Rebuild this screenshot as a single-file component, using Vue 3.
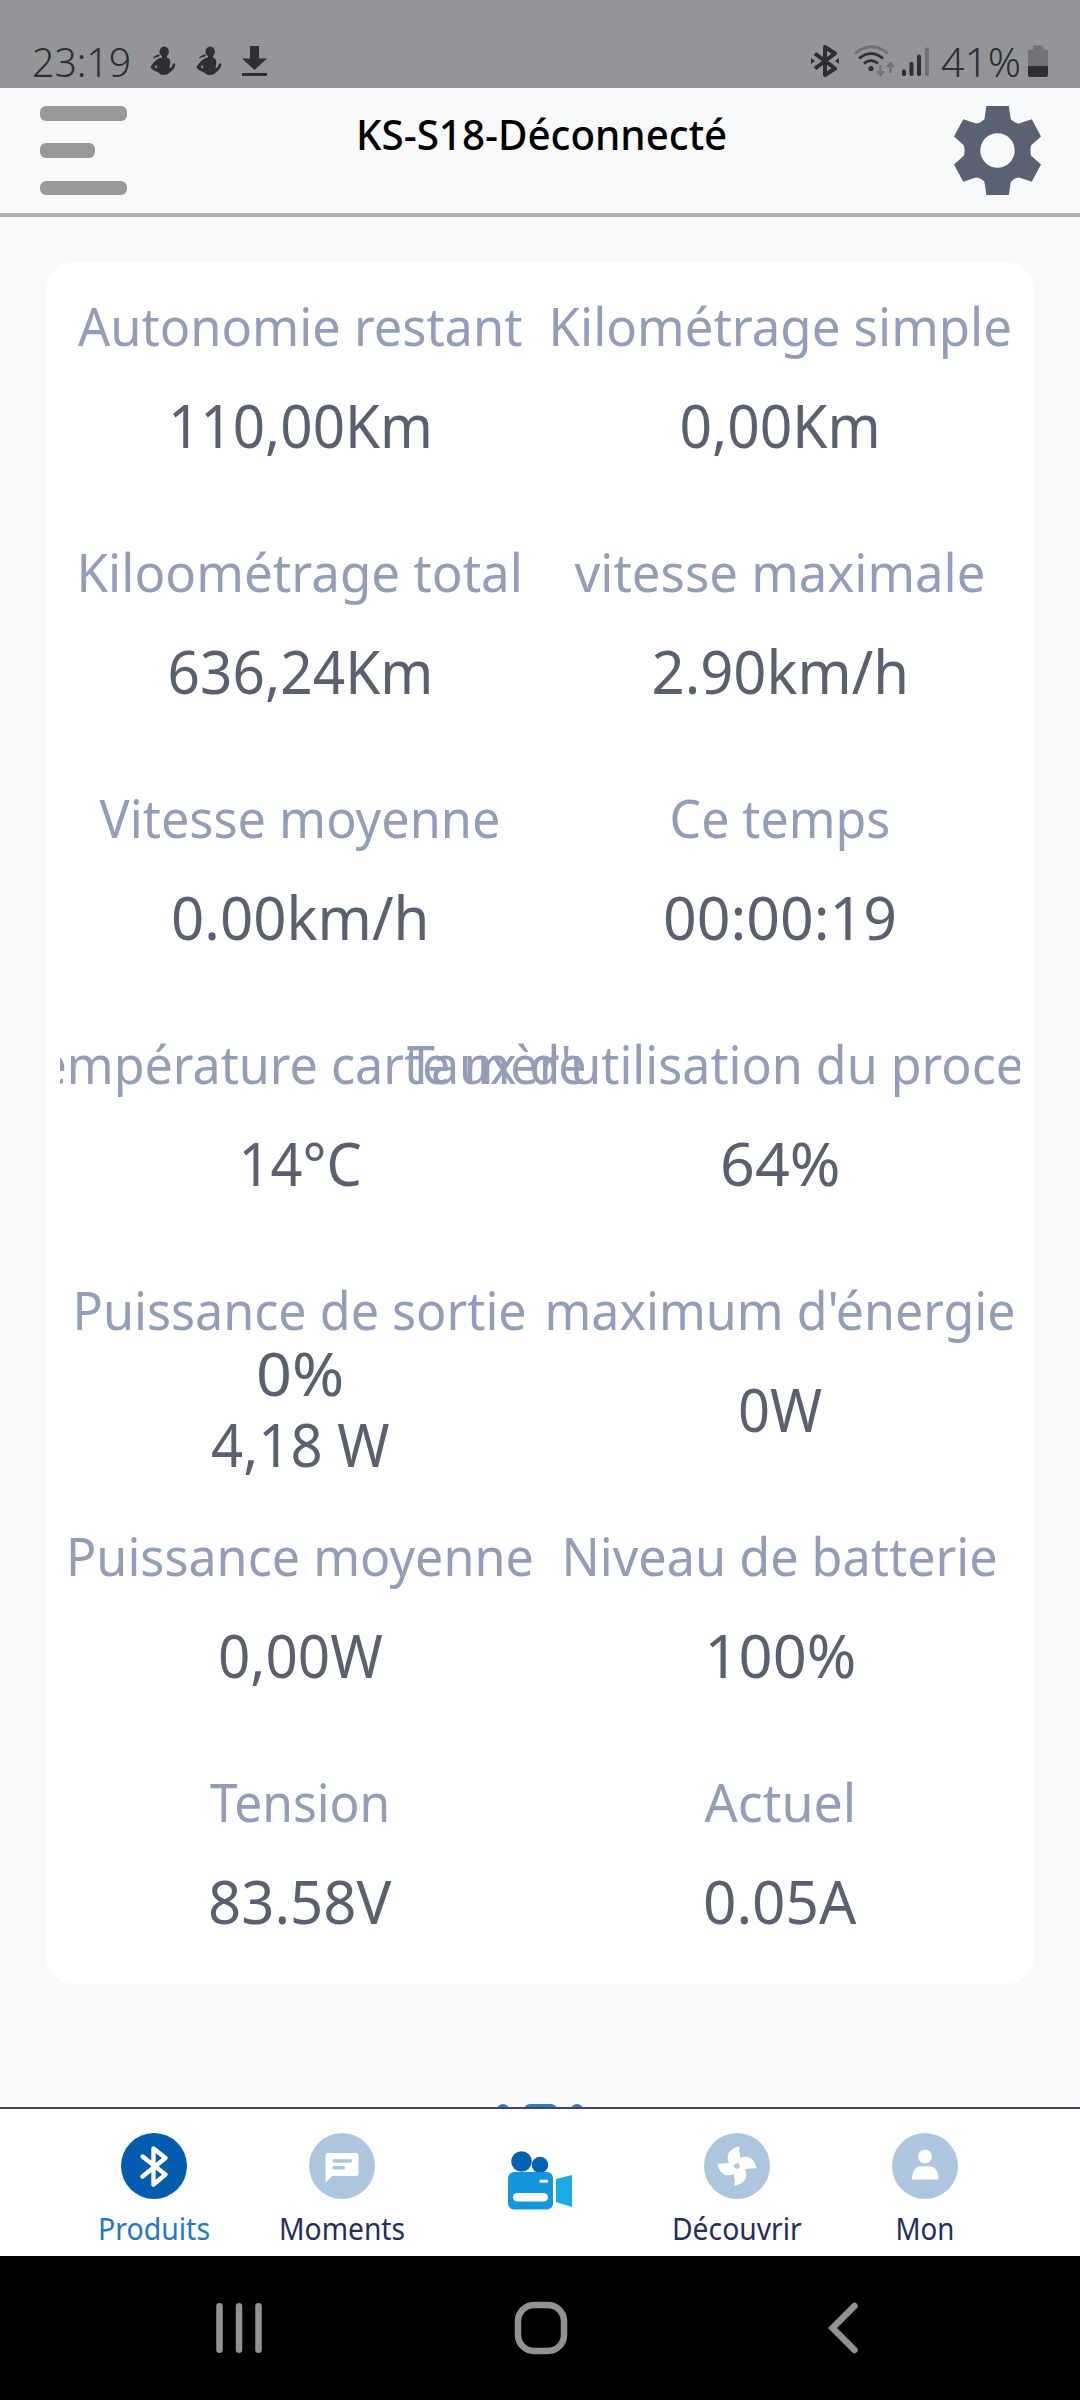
<template>
    <div class="screen">
        <header class="status-bar">
            <div class="time"><span v-fit="99">23:19</span></div>
            <svg v-for="n in 2" :key="n" class="person" width="26" height="32" viewBox="0 0 26 32">
                <ellipse cx="14.2" cy="6.6" rx="4.7" ry="5.2" />
                <path d="M3 13 Q5 9.5 10 9.5 L8.8 11.8 Q6 11.5 3.6 13.6 Z" />
                <path fill-rule="evenodd" d="M12 10 H17 V12.5 Q20.5 13.5 20.3 17 L19.5 23.5 Q22.5 22 23 18.8 Q24.5 17.6 25.4 19 Q25 24 20 27.3 Q18 30 13.5 30 Q9.5 30 8.5 27.6 Q3 26 .4 22.6 Q3 17 8.6 13.6 L12 12.4 Z M6.6 19.8 L4.6 22.2 L7.2 23.6 Z" />
            </svg>
            <svg class="download" width="25" height="32" viewBox="0 0 25 32">
                <path d="M8 1 H17 V13.5 H25 L12.5 25 L0 13.5 H8 Z M0 28 H25 V31 H0 Z" />
            </svg>
            <div class="spacer"></div>
            <svg class="bt" width="28" height="32" viewBox="0 0 28 32">
                <path d="M4 8.5 L24 23.5 L14 30 V2 L24 8.5 L4 23.5" fill="none" stroke="#2e2f31" stroke-width="4" stroke-linejoin="round" />
                <path d="M0 13 L4 16 L0 19 Z M28 13 L24 16 L28 19 Z" />
            </svg>
            <svg class="wifi" width="41" height="32" viewBox="0 0 41 32" fill="none" stroke="#2e2f31" stroke-width="2.8">
                <path d="M1 8.5 Q17 -5 34 8.5" stroke="#717275" />
                <path d="M5 13.5 Q17 3.8 29 13.5" />
                <path d="M10 18.5 Q17 12.8 24 18.5" />
                <circle cx="17" cy="23.5" r="1.2" />
                <path d="M26.5 20 V30 M23 26.3 L26.5 30 L30 26.3 M36.5 28 V18.5 M33 22 L36.5 18.3 L40 22" stroke="#717275" stroke-width="2.4" />
            </svg>
            <svg class="signal" width="27" height="32" viewBox="0 0 27 32">
                <rect x="0" y="24.5" width="4" height="6.5" rx="1.8" />
                <rect x="7.5" y="17" width="4" height="14" rx="1.8" />
                <rect x="15" y="9.5" width="4" height="21.5" rx="1.8" />
                <rect x="23" y="2.5" width="4" height="28.5" rx="1.8" fill="#717275" />
            </svg>
            <div class="percent"><span v-fit="80">41%</span></div>
            <svg width="20" height="32" viewBox="0 0 20 32">
                <path d="M6 .5 H14 Q15 .5 15 2 V4.5 H18 Q20 4.5 20 6.5 V21 H0 V6.5 Q0 4.5 2 4.5 H5 V2 Q5 .5 6 .5 Z" fill="#717275" />
                <path d="M0 21 H20 V30 Q20 32 18 32 H2 Q0 32 0 30 Z" />
            </svg>
        </header>

        <div class="title-bar">
            <div class="menu">
                <i></i>
                <i class="short"></i>
                <i></i>
            </div>
            <h1><span v-fit="371">KS-S18-Déconnecté</span></h1>
            <svg width="87" height="89" viewBox="0 0 87 89">
                <path fill="#5b6072" fill-rule="evenodd" d="M32.4 0 H54.8 L56.8 13.3 Q61 17.5 65 17.5 L77.8 13.3 L87 30.5 L77 39.5 Q75.8 44.5 77 49.5 L87 58.5 L77.8 75.7 L65 71.5 Q61 71.5 56.8 75.7 L54.8 89 H32.4 L30.4 75.7 Q26 71.5 22 71.5 L9.2 75.7 L0 58.5 L10 49.5 Q11.2 44.5 10 39.5 L0 30.5 L9.2 13.3 L22 17.5 Q26 17.5 30.4 13.3 Z M43.5 27.3 A17.2 17.2 0 1 0 43.5 61.7 A17.2 17.2 0 1 0 43.5 27.3 Z" />
            </svg>
        </div>

        <main class="content">
            <section class="card">
                <div class="grid">
                    <div v-for="item in stats" :key="item.label" class="cell">
                        <div class="label"><span v-fit="item.width">{{ item.label }}</span></div>
                        <div class="value">
                            <span v-for="line in item.lines" :key="line[0]" v-fit="line[1]">{{ line[0] }}</span>
                        </div>
                    </div>
                </div>
            </section>
            <!-- top of the round button hidden behind the tab bar -->
            <div class="peek">
                <i></i>
                <i class="wide"></i>
                <i></i>
            </div>
        </main>

        <nav class="tabs">
            <div class="tab active">
                <svg width="66" height="66" viewBox="0 0 66 66">
                    <circle cx="33" cy="33" r="33" fill="#035cad" />
                    <path d="M21.5 23.5 L44.5 41.5 L32.5 51.5 V15.5 L44.5 25 L21.5 43.5" fill="none" stroke="#fff" stroke-width="4.4" stroke-linecap="round" stroke-linejoin="round" />
                </svg>
                <div class="tab-name"><span v-fit="112">Produits</span></div>
            </div>
            <div class="tab">
                <svg width="66" height="66" viewBox="0 0 66 66">
                    <circle cx="33" cy="33" r="33" fill="#adc6de" />
                    <path d="M19 20 H47 Q49.5 20 49.5 22.5 V40.5 Q49.5 43 47 43 H23 L16.5 49.5 V22.5 Q16.5 20 19 20 Z" fill="#fff" />
                    <path d="M25 28 H41.5 M25 34.7 H34.5" stroke="#adc6de" stroke-width="3.4" stroke-linecap="round" />
                </svg>
                <div class="tab-name"><span v-fit="126">Moments</span></div>
            </div>
            <div class="tab camera">
                <svg width="66" height="60" viewBox="0 0 66 60">
                    <circle cx="14.5" cy="10.5" r="10.3" fill="#0460b2" />
                    <circle cx="33" cy="14" r="8.2" fill="#0460b2" />
                    <rect x="1" y="21" width="45" height="37.5" rx="6" fill="#1596dc" />
                    <path d="M49 28 L65 24 V56 L49 51 Z" fill="#1aabe4" />
                    <rect x="6" y="42" width="35" height="8.6" rx="4.3" fill="#fff" />
                    <rect x="32.5" y="28.7" width="8.5" height="3" rx="1" fill="#fff" />
                </svg>
            </div>
            <div class="tab">
                <svg width="66" height="66" viewBox="0 0 66 66">
                    <circle cx="33" cy="33" r="33" fill="#adc6de" />
                    <g fill="#fff">
                        <path v-for="a in [0, 90, 180, 270]" :key="a" :transform="`rotate(${a} 33 33)`" d="M33 36 L24.5 29 Q20.5 17 35.5 13.2 Q34.5 18 36.3 24.5 L37 33 Z" />
                    </g>
                    <circle cx="33" cy="33" r="2.8" fill="#adc6de" />
                </svg>
                <div class="tab-name"><span v-fit="130">Découvrir</span></div>
            </div>
            <div class="tab">
                <svg width="66" height="66" viewBox="0 0 66 66">
                    <circle cx="33" cy="33" r="33" fill="#adc6de" />
                    <circle cx="33" cy="23.5" r="6.9" fill="#fff" />
                    <path d="M20 46.5 Q20 33.3 30 33.3 H36.5 Q46.5 33.3 46.5 46.5 Z" fill="#fff" />
                </svg>
                <div class="tab-name"><span v-fit="59">Mon</span></div>
            </div>
        </nav>

        <footer class="android-nav">
            <svg class="recents" width="48" height="54" viewBox="0 0 48 54">
                <path d="M4.5 5.2 V48.8 M24 5.2 V48.8 M43.5 5.2 V48.8" />
            </svg>
            <svg class="home" width="54" height="54" viewBox="0 0 54 54">
                <rect x="4" y="4" width="46" height="46" rx="16" />
            </svg>
            <svg class="back" width="30" height="54" viewBox="0 0 30 54">
                <path d="M26.5 5 L4.5 27 L26.5 49" />
            </svg>
        </footer>
    </div>
</template>

<script setup>
// stretches or narrows a text so that it takes the given width
const vFit = {
    mounted(el, binding) {
        el.style.transform = `scaleX(${binding.value / el.offsetWidth})`;
    }
}

const stats = [
    { label: 'Autonomie restant', width: 444, lines: [['110,00Km', 265]] },
    { label: 'Kilométrage simple', width: 463, lines: [['0,00Km', 201]] },
    { label: 'Kiloométrage total', width: 446, lines: [['636,24Km', 266]] },
    { label: 'vitesse maximale', width: 411, lines: [['2.90km/h', 258]] },
    { label: 'Vitesse moyenne', width: 401, lines: [['0.00km/h', 259]] },
    { label: 'Ce temps', width: 221, lines: [['00:00:19', 234]] },
    { label: 'Température carte mère', width: 573, lines: [['14°C', 123]] },
    { label: "Taux d'utilisation du processeur", width: 745, lines: [['64%', 121]] },
    { label: 'Puissance de sortie', width: 454, lines: [['0%', 88], ['4,18 W', 178]] },
    { label: "maximum d'énergie", width: 471, lines: [['0W', 84]] },
    { label: 'Puissance moyenne', width: 468, lines: [['0,00W', 165]] },
    { label: 'Niveau de batterie', width: 436, lines: [['100%', 152]] },
    { label: 'Tension', width: 180, lines: [['83.58V', 183]] },
    { label: 'Actuel', width: 152, lines: [['0.05A', 153]] }
];
</script>

<style>
    body {
        margin: 0;
        background: #f8f9fb;
    }
</style>

<style scoped>
    .screen {
        width: 1080px;
        height: 2400px;
        display: flex;
        flex-direction: column;
        overflow: hidden;
        background: #f8f9fb;
        font-family: "Noto Sans", "Open Sans", sans-serif;
    }
    .screen svg {
        display: block;
        flex: none;
    }
    .screen span {
        display: inline-block;
        flex: none;
        white-space: nowrap;
    }
    .status-bar {
        box-sizing: border-box;
        height: 88px;
        flex: none;
        display: flex;
        padding: 45px 32px 0 34px;
        background: #949599;
        color: #2e2f31;
        fill: #2e2f31;
        font-size: 40px;
        font-weight: 350;
        line-height: 33px;
    }
    .time {
        width: 96px;
        display: flex;
        justify-content: center;
    }
    .person {
        margin-left: 20px;
    }
    .download {
        margin-left: 20px;
    }
    .spacer {
        flex: 1;
    }
    .bt {
        margin-right: 15px;
    }
    .wifi {
        margin-right: 7px;
    }
    .signal {
        margin-right: 13px;
    }
    .percent {
        width: 78px;
        margin-right: 8px;
        display: flex;
        justify-content: center;
    }
    .title-bar {
        box-sizing: border-box;
        height: 129px;
        flex: none;
        display: flex;
        justify-content: space-between;
        padding: 18px 39px 0 40px;
        border-bottom: 4px solid #b1b1b3;
    }
    .menu {
        width: 87px;
        height: 89px;
        display: flex;
        flex-direction: column;
        justify-content: space-between;
    }
    .menu i {
        height: 14.5px;
        border-radius: 6px;
        background: #999;
    }
    .menu .short {
        width: 55px;
    }
    h1 {
        margin: 0;
        flex: 1;
        height: 60px;
        display: flex;
        justify-content: center;
        padding-left: 2px;
        color: #000;
        font-size: 41px;
        font-weight: 500;
        line-height: 57px;
    }
    .content {
        flex: 1;
        display: flex;
        flex-direction: column;
        justify-content: space-between;
        align-items: center;
        padding-top: 45px;
    }
    .card {
        box-sizing: border-box;
        width: 990px;
        height: 1722px;
        padding: 0 15px;
        border-radius: 30px;
        background: #fff;
    }
    .grid {
        display: grid;
        grid-template-columns: 480px 480px;
        grid-auto-rows: 246px;
        overflow: hidden;
    }
    .cell {
        box-sizing: border-box;
        padding-top: 27px;
    }
    .label {
        height: 73px;
        display: flex;
        justify-content: center;
        color: #939db8;
        font-size: 53px;
        line-height: 73px;
    }
    .value {
        height: 126px;
        display: flex;
        flex-direction: column;
        justify-content: center;
        align-items: center;
        color: #5b6070;
        font-size: 60px;
        line-height: 71px;
    }
    .peek {
        width: 86px;
        height: 3px;
        display: flex;
        justify-content: space-between;
        overflow: hidden;
    }
    .peek i {
        width: 12px;
        height: 12px;
        border-radius: 6px;
        background: #2a7dc0;
    }
    .peek .wide {
        width: 33px;
    }
    .tabs {
        box-sizing: border-box;
        height: 149px;
        flex: none;
        display: grid;
        grid-template-columns: 188px 188px 207px 188px 188px;
        padding-left: 60px;
        border-top: 2px solid #44435c;
        background: #fff;
    }
    .tab {
        padding-top: 24px;
        display: flex;
        flex-direction: column;
        align-items: center;
        color: #242e5c;
    }
    .tab.active {
        color: #2479bf;
    }
    .tab.camera {
        padding-top: 42px;
    }
    .tab-name {
        display: flex;
        justify-content: center;
        margin-top: 10px;
        font-size: 30px;
        line-height: 40px;
    }
    .android-nav {
        height: 144px;
        flex: none;
        display: flex;
        align-items: center;
        background: #000;
        fill: none;
        stroke: #929292;
        stroke-width: 6.5;
        stroke-linecap: round;
    }
    .recents {
        margin-left: 215px;
    }
    .home {
        margin-left: 251px;
    }
    .back {
        margin-left: 260px;
    }
</style>
